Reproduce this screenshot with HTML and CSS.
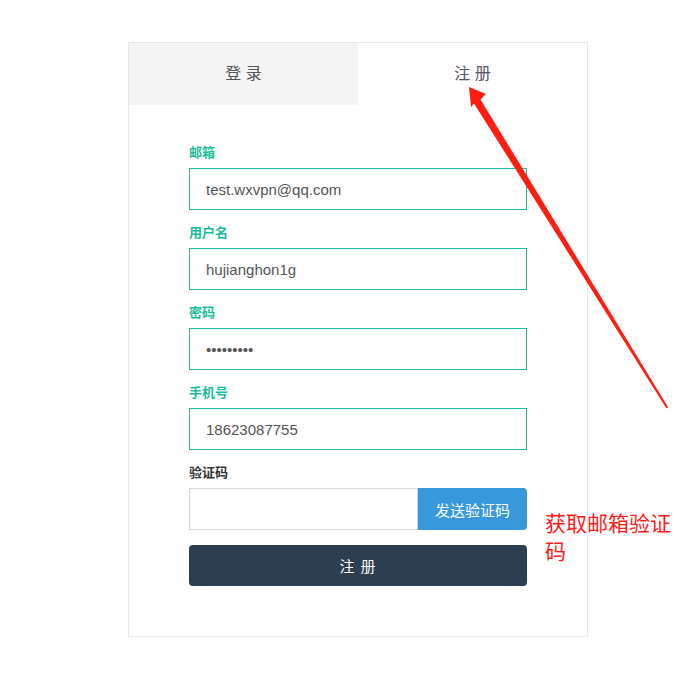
FILE: index.html
```html
<!DOCTYPE html>
<html lang="zh-CN">
<head>
  <meta charset="UTF-8">
  <title>注册</title>
  <link rel="stylesheet" href="styles.css">
</head>
<body>
  <div class="card">
    <div class="tabs">
      <div class="tab">登 录</div>
      <div class="tab active">注 册</div>
    </div>

    <form class="form">
      <div class="group">
        <label>邮箱</label>
        <input type="text" class="valid" value="test.wxvpn@qq.com">
      </div>
      <div class="group">
        <label>用户名</label>
        <input type="text" class="valid" value="hujianghon1g">
      </div>
      <div class="group">
        <label>密码</label>
        <input type="password" class="valid" value="123456789">
      </div>
      <div class="group">
        <label>手机号</label>
        <input type="text" class="valid" value="18623087755">
      </div>
      <div class="group">
        <label class="plain">验证码</label>
        <div class="code-row">
          <input type="text">
          <button type="button" class="send">发送验证码</button>
        </div>
      </div>
      <button type="button" class="submit">注 册</button>
    </form>
  </div>

  <!-- 标注 -->
  <svg class="arrow" width="694" height="682" viewBox="0 0 694 682">
    <polygon fill="#ff1e10" points="469,87 486,94 480.5,99.5 668,407 666.5,408.5 474,103.5 471,107"/>
  </svg>
  <div class="note">获取邮箱验证码</div>
</body>
</html>
```

FILE: styles.css
```css
body {
  margin: 0;
  background: #fff;
  font-family: 'Liberation Sans', Arial, 'Noto Sans CJK SC', sans-serif;
}

.card {
  width: 458px;
  margin: 42px 0 0 128px;
  border: 1px solid #e3e9f1;
  background: #fff;
}

.tabs {
  display: grid;
  grid-template-columns: 1fr 1fr;
}

.tab {
  height: 62px;
  line-height: 61px;
  text-align: center;
  font-size: 16px;
  color: #555;
  background: #f4f4f4;
}

.tab.active {
  background: #fff;
  color: #556;
}

.form {
  padding: 39px 60px 50px;
}

.group {
  margin-bottom: 14px;
}

label {
  display: block;
  font-size: 13px;
  font-weight: bold;
  line-height: 18px;
  margin-bottom: 6px;
  color: #1abc9c;
}

label.plain {
  color: #333;
}

input {
  display: block;
  box-sizing: border-box;
  width: 100%;
  height: 42px;
  padding: 0 16px;
  font-family: inherit;
  font-size: 15px;
  color: #555;
  border: 1px solid #d2d6de;
  border-radius: 0;
  outline: none;
  margin: 0;
}

input.valid {
  border-color: #1abc9c;
}

.code-row {
  display: flex;
}

.code-row input {
  flex: 1;
}

button {
  font-family: inherit;
  border: none;
  cursor: pointer;
  color: #fff;
  margin: 0;
}

.send {
  width: 109px;
  height: 42px;
  font-size: 15px;
  background: #3799dc;
  border-radius: 0 4px 4px 0;
}

.submit {
  display: block;
  width: 100%;
  height: 41px;
  margin-top: 15px;
  font-size: 15px;
  letter-spacing: 1px;
  background: #2d3e50;
  border-radius: 4px;
}

.arrow {
  position: absolute;
  left: 0;
  top: 0;
  pointer-events: none;
}

.note {
  position: absolute;
  left: 545px;
  top: 510px;
  width: 128px;
  font-size: 21px;
  line-height: 28px;
  color: #ff1a1a;
}
```
